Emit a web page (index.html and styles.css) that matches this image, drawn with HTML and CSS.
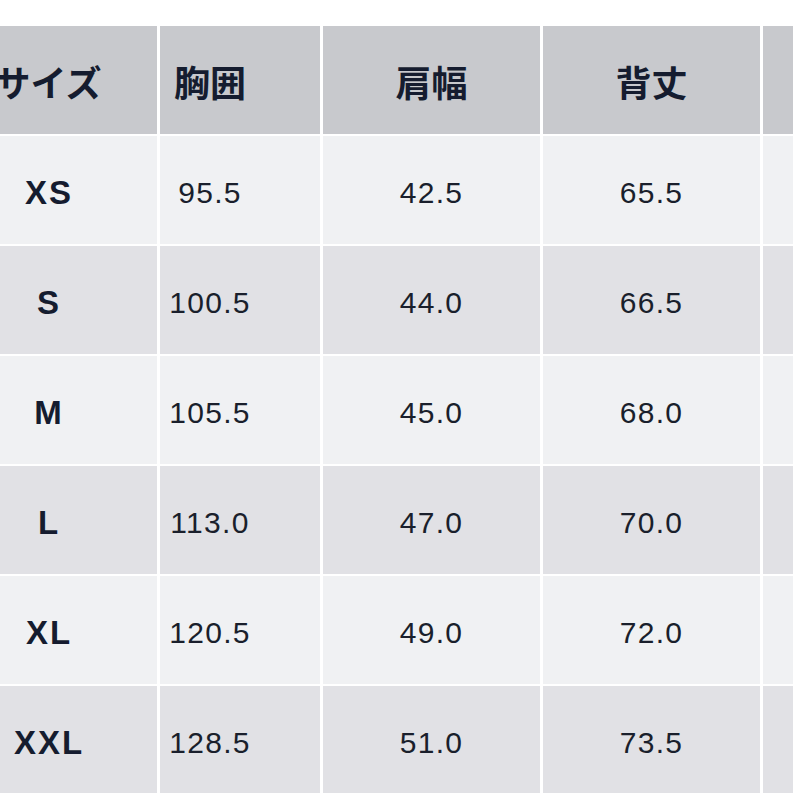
FILE: index.html
```html
<!DOCTYPE html>
<html lang="ja">
<head>
<meta charset="utf-8">
<title>サイズ表</title>
<link rel="stylesheet" href="styles.css">
</head>
<body>
<div class="page">
  <div class="table">
    <div class="cell head c1">サイズ</div>
    <div class="cell head c2">胸囲</div>
    <div class="cell head">肩幅</div>
    <div class="cell head">背丈</div>
    <div class="cell head"></div>

    <div class="cell odd size c1">XS</div>
    <div class="cell odd num c2">95.5</div>
    <div class="cell odd num">42.5</div>
    <div class="cell odd num">65.5</div>
    <div class="cell odd"></div>

    <div class="cell even size c1">S</div>
    <div class="cell even num c2">100.5</div>
    <div class="cell even num">44.0</div>
    <div class="cell even num">66.5</div>
    <div class="cell even"></div>

    <div class="cell odd size c1">M</div>
    <div class="cell odd num c2">105.5</div>
    <div class="cell odd num">45.0</div>
    <div class="cell odd num">68.0</div>
    <div class="cell odd"></div>

    <div class="cell even size c1">L</div>
    <div class="cell even num c2">113.0</div>
    <div class="cell even num">47.0</div>
    <div class="cell even num">70.0</div>
    <div class="cell even"></div>

    <div class="cell odd size c1">XL</div>
    <div class="cell odd num c2">120.5</div>
    <div class="cell odd num">49.0</div>
    <div class="cell odd num">72.0</div>
    <div class="cell odd"></div>

    <div class="cell even size c1">XXL</div>
    <div class="cell even num c2">128.5</div>
    <div class="cell even num">51.0</div>
    <div class="cell even num">73.5</div>
    <div class="cell even"></div>
  </div>
</div>
</body>
</html>
```

FILE: styles.css
```css
html, body {
  margin: 0;
  padding: 0;
  overflow: hidden;
  background: #ffffff;
}

.page {
  width: 793px;
  height: 793px;
  overflow: hidden;
  padding-top: 26px;
  box-sizing: border-box;
}

.table {
  margin-left: -61px;
  display: grid;
  grid-template-columns: 218px 160px 217px 217px 218px;
  grid-auto-rows: 108px;
  column-gap: 3px;
  row-gap: 2px;
  width: max-content;
  font-family: "Liberation Sans", "Noto Sans CJK JP", sans-serif;
  color: #151c2f;
}

.cell {
  display: flex;
  align-items: center;
  justify-content: center;
  box-sizing: border-box;
  white-space: nowrap;
  padding-top: 5px;
}

.c2 {
  padding-right: 60px;
}

.head {
  background: #c8c9cd;
  font-family: "Noto Sans CJK JP", sans-serif;
  font-weight: 700;
  font-size: 36px;
  padding-top: 1px;
  letter-spacing: 0;
}

.odd {
  background: #f0f1f3;
}

.even {
  background: #e1e1e5;
}

.size {
  font-weight: 700;
  font-size: 33px;
  letter-spacing: 2px;
  padding-left: 2px;
}

.num {
  font-size: 30px;
  letter-spacing: 1.3px;
  color: #1a1f2c;
}
```
